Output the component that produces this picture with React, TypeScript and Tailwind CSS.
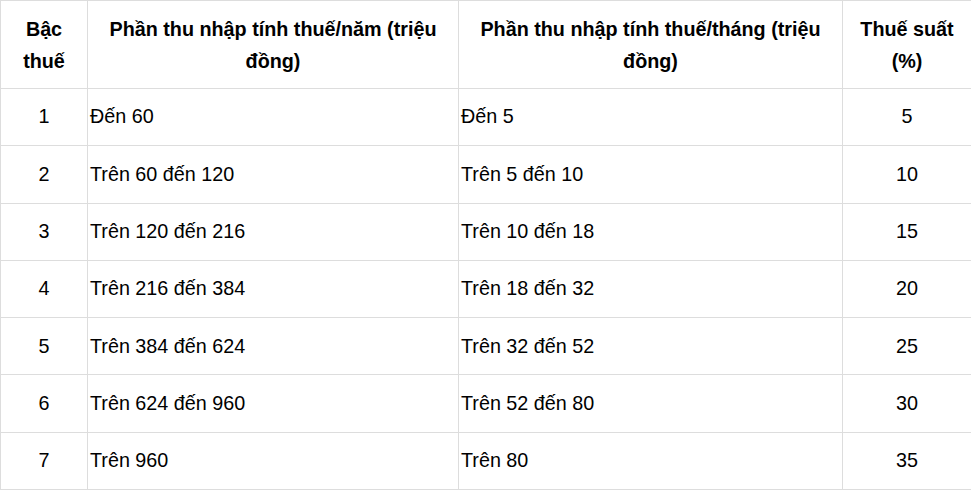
const rows = [
  { level: "1", year: "Đến 60", month: "Đến 5", rate: "5" },
  { level: "2", year: "Trên 60 đến 120", month: "Trên 5 đến 10", rate: "10" },
  { level: "3", year: "Trên 120 đến 216", month: "Trên 10 đến 18", rate: "15" },
  { level: "4", year: "Trên 216 đến 384", month: "Trên 18 đến 32", rate: "20" },
  { level: "5", year: "Trên 384 đến 624", month: "Trên 32 đến 52", rate: "25" },
  { level: "6", year: "Trên 624 đến 960", month: "Trên 52 đến 80", rate: "30" },
  { level: "7", year: "Trên 960", month: "Trên 80", rate: "35" },
];

export default function App() {
  return (
    <div className="bg-white w-[971px] h-[490px] overflow-hidden">
      <table
        className="table-fixed border-collapse w-[975px] text-[19.75px] text-black"
        style={{ fontFamily: '"Liberation Sans", Arial, sans-serif' }}
      >
        <colgroup>
          <col className="w-[87px]" />
          <col className="w-[371px]" />
          <col className="w-[384px]" />
          <col className="w-[133px]" />
        </colgroup>
        <thead>
          <tr className="h-[88px]">
            <th className="border border-[#dddddd] px-2 font-bold leading-[32px] text-center">
              Bậc thuế
            </th>
            <th className="border border-[#dddddd] px-[3px] font-bold leading-[32px] text-center">
              Phần thu nhập tính thuế/năm (triệu đồng)
            </th>
            <th className="border border-[#dddddd] px-[3px] font-bold leading-[32px] text-center">
              Phần thu nhập tính thuế/tháng (triệu đồng)
            </th>
            <th className="border border-[#dddddd] px-2 pr-[12px] font-bold leading-[32px] text-center">
              Thuế suất (%)
            </th>
          </tr>
        </thead>
        <tbody>
          {rows.map((r) => (
            <tr key={r.level} className="h-[57.3px]">
              <td className="border border-[#dddddd] px-2 text-center">{r.level}</td>
              <td className="border border-[#dddddd] px-[2px] text-left">{r.year}</td>
              <td className="border border-[#dddddd] px-[2px] text-left">{r.month}</td>
              <td className="border border-[#dddddd] px-2 pr-[12px] text-center">{r.rate}</td>
            </tr>
          ))}
        </tbody>
      </table>
    </div>
  );
}
